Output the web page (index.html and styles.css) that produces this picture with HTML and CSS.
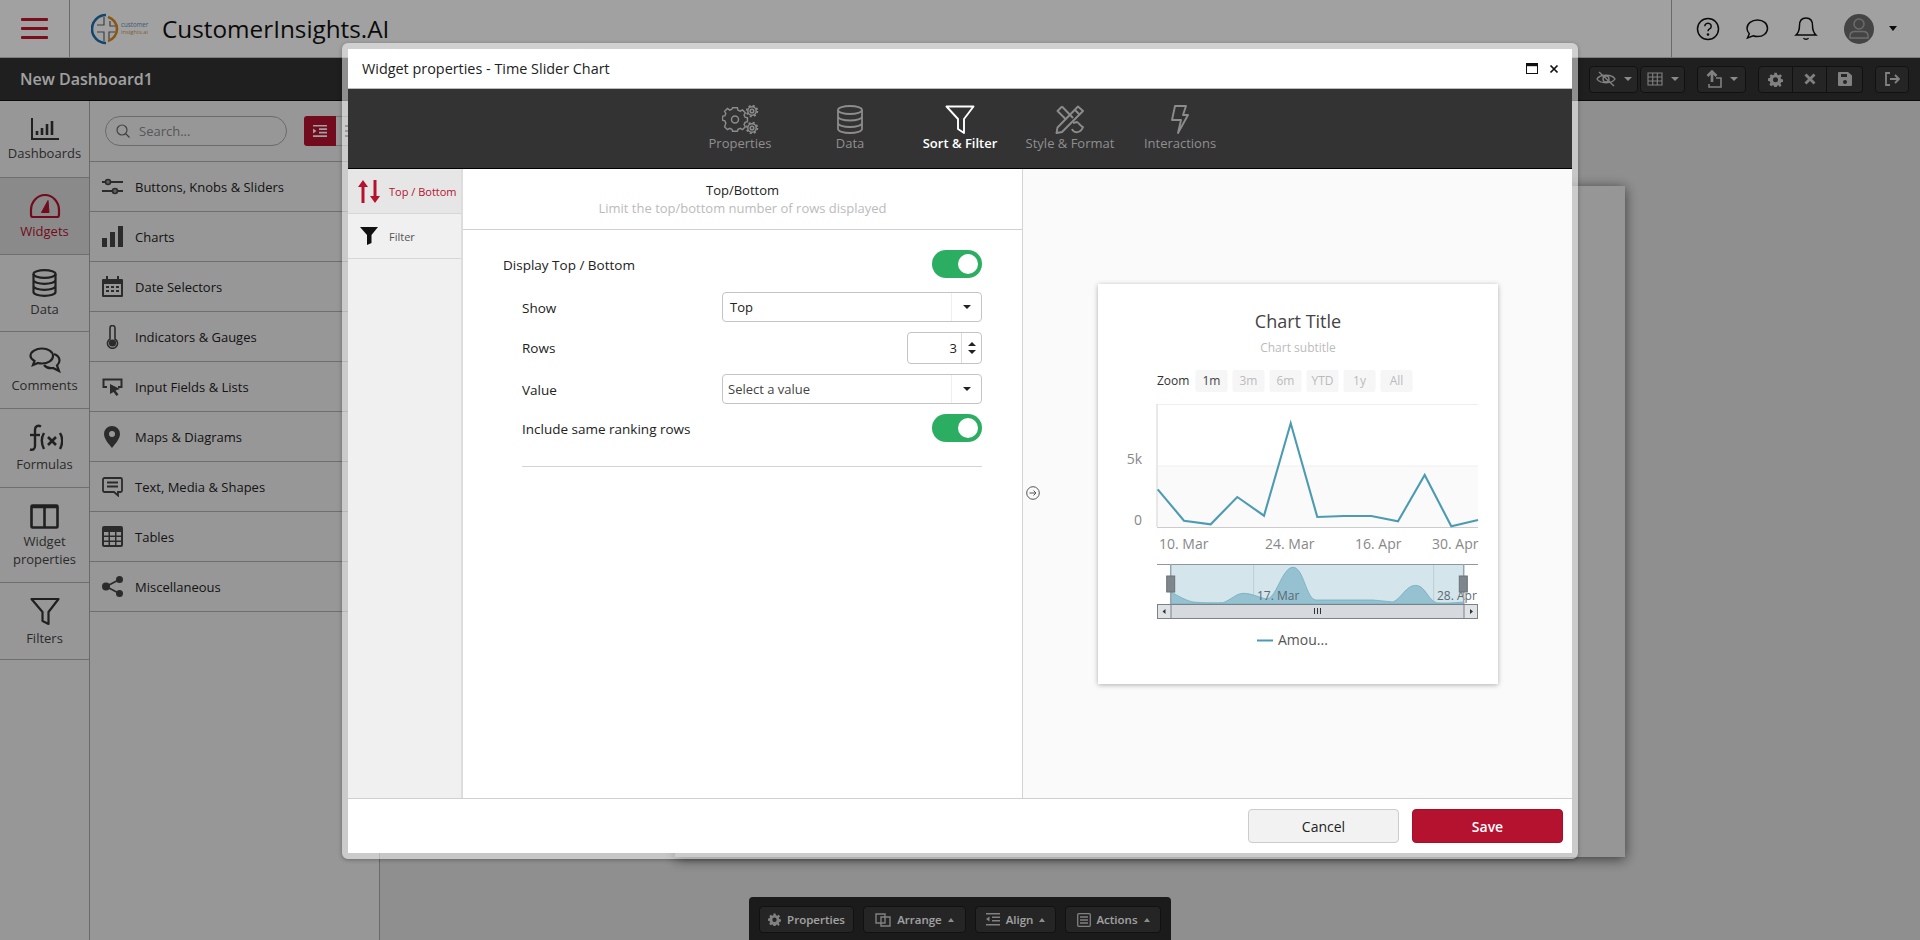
FILE: index.html
```html
<!DOCTYPE html>
<html lang="en">
<head>
<meta charset="utf-8">
<title>CustomerInsights.AI</title>
<link rel="stylesheet" href="styles.css">
</head>
<body>
<div class="app">
  <header class="topbar">
    <div class="burger"><i></i><i></i><i></i></div>
    <div class="brand">
      <svg class="logo" width="58" height="32" viewBox="0 0 58 32">
        <path d="M15 2 A14 14 0 0 0 15 30" fill="none" stroke="#1d6fa8" stroke-width="2.6"/>
        <path d="M17 4 A12.5 12.5 0 0 1 17 28" fill="none" stroke="#d98a1f" stroke-width="2.6"/>
        <path d="M13 4V12H6M6 19H13V28M19 8V13H24M24 19H18V26" fill="none" stroke="#666" stroke-width="1.2"/>
        <text class="logo-a" x="30" y="14">customer</text>
        <text class="logo-b" x="30" y="21">insights.ai</text>
      </svg>
      <span class="brand-name">CustomerInsights.AI</span>
    </div>
    <div class="top-actions">
      <svg width="24" height="24" viewBox="0 0 24 24" fill="none" stroke="#111" stroke-width="1.5"><circle cx="12" cy="12" r="10.5"/><path d="M8.8 9.3a3.2 3 0 1 1 4.8 2.6c-1 .6-1.6 1.1-1.6 2.4"/><circle cx="12" cy="17.5" r=".6" fill="#111"/></svg>
      <svg width="24" height="24" viewBox="0 0 24 24" fill="none" stroke="#111" stroke-width="1.5"><path d="M12.5 3c5.800 0 10 3.500 10 8.300s-4.200 8.300-10 8.300c-1.600 0-3-.3-4.300-.8L2.500 21l1.800-4.300C2.800 15.200 2 13.400 2 11.300 2 6.500 6.700 3 12.500 3z"/></svg>
      <svg width="24" height="26" viewBox="0 0 24 26" fill="none" stroke="#111" stroke-width="1.5"><path d="M12 2c4.500 0 6.500 3.500 6.500 7.500 0 5 1.300 7.500 3.500 9.500H2c2.200-2 3.500-4.500 3.500-9.500C5.500 5.500 7.500 2 12 2z"/><path d="M9.500 22c1 1.800 4 1.800 5 0"/></svg>
      <div class="avatar">
        <svg width="30" height="30" viewBox="0 0 30 30" fill="none" stroke="#aaa" stroke-width="1.5"><circle cx="15" cy="10" r="5"/><path d="M6 24v-2c0-3 2-4.500 5-4.500h8c3 0 5 1.500 5 4.500v2z"/></svg>
      </div>
      <span class="caret-dark"></span>
    </div>
  </header>

  <div class="dashbar">
    <div class="dash-title">New Dashboard1</div>
    <div class="dash-tools">
      <div class="tool-group tight">
        <div class="tool w49"><svg width="20" height="16" viewBox="0 0 20 16" fill="none" stroke="#ccc" stroke-width="1.400"><path d="M1 8c3-5 15-5 18 0-3 5-15 5-18 0z"/><circle cx="10" cy="8" r="3"/><path d="M3 1l15 14"/></svg><span class="caret-up-light"></span></div>
        <div class="tool w45"><svg width="16" height="14" viewBox="0 0 16 14" fill="none" stroke="#ccc" stroke-width="1.100"><path d="M1 1h14v12H1zM1 5h14M1 9h14M5.700 1v12M10.300 1v12"/></svg><span class="caret-up-light"></span></div>
      </div>
      <div class="tool w49"><svg width="16" height="18" viewBox="0 0 16 18" fill="none" stroke="#ccc" stroke-width="1.600"><path d="M6 2v10M1.500 6L6 1.500 10.500 6" stroke-width="2.600"/><path d="M10 8h5v9H3v-3"/></svg><span class="caret-up-light"></span></div>
      <div class="tool-group">
        <div class="tool w35"><svg width="15" height="15" viewBox="0 0 24 24"><path fill="#ccc" d="M10 1h4l.6 3 2.400 1 2.600-1.600 2.800 2.800L20 8.800l1 2.400 3 .6v4l-3 .6-1 2.400 1.600 2.600-2.800 2.800L17 21l-2.400 1-.6 2h-4l-.6-2L7.600 21 5 22.600 2.200 19.800 3.800 17.200l-1-2.400-3-.6v-4l3-.6 1-2.400L2.200 6.200 5 3.400 7.600 5 10 4z M12 8.500a4 4 0 1 0 0 8 4 4 0 0 0 0-8z" fill-rule="evenodd"/></svg></div>
        <div class="tool w34"><svg width="12" height="12" viewBox="0 0 12 12" stroke="#ccc" stroke-width="2.800"><path d="M1.500 1.500l9 9M10.500 1.500l-9 9"/></svg></div>
        <div class="tool w36"><svg width="14" height="14" viewBox="0 0 14 14"><path fill="#ccc" fill-rule="evenodd" d="M1 0h9l4 3.500V13a1 1 0 0 1-1 1H1a1 1 0 0 1-1-1V1a1 1 0 0 1 1-1zm2 2v3h6V2zm4 6a2 2 0 1 0 0 4 2 2 0 0 0 0-4z"/></svg></div>
      </div>
      <div class="tool w34"><svg width="16" height="14" viewBox="0 0 16 14" fill="none" stroke="#ccc" stroke-width="1.800"><path d="M6 1H2v12h4M6 7h9M11 3l4 4-4 4"/></svg></div>
    </div>
  </div>

  <div class="main">
    <nav class="rail">
      <div class="rail-item h77">
        <svg width="29" height="24" viewBox="0 0 29 24" fill="none" stroke="#333" stroke-width="2"><path d="M2 1v21h27"/><path d="M7 14v4M12 11v7M17 7v11M22 4v14" stroke-width="2.600"/></svg>
        <span>Dashboards</span>
      </div>
      <div class="rail-item h77 active">
        <svg width="32" height="26" viewBox="0 0 32 26" fill="none" stroke="#b5122f" stroke-width="2.200"><path d="M4 24H28a2 2 0 0 0 2-2V17A14 15 0 0 0 2 17v5a2 2 0 0 0 2 2z"/><path d="M12.500 19.500l6.500-12 1 12z" fill="#b5122f" stroke-width="1"/></svg>
        <span>Widgets</span>
      </div>
      <div class="rail-item h77">
        <svg width="25" height="28" viewBox="0 0 25 28" fill="none" stroke="#333" stroke-width="2.200"><ellipse cx="12.500" cy="5" rx="11" ry="3.800"/><path d="M1.500 5v18c0 2.200 5 3.800 11 3.800s11-1.600 11-3.800V5M1.500 11c0 2.200 5 3.800 11 3.800s11-1.600 11-3.800M1.500 17c0 2.200 5 3.800 11 3.800s11-1.600 11-3.800"/></svg>
        <span>Data</span>
      </div>
      <div class="rail-item h77">
        <svg width="32" height="26" viewBox="0 0 32 26" fill="none" stroke="#333" stroke-width="2.200"><path d="M13 1.500c6 0 11 3 11 7.500s-5 7.500-11 7.500c-1.500 0-3-.2-4-.5l-5 2 1.500-4C3 12.500 1.500 11 1.500 9c0-4.500 5.500-7.500 11.500-7.500z"/><path d="M25 7c3.500 1.300 5.500 3.500 5.500 6.500 0 2-1 3.500-2.500 5l2 5.500-6-3c-3 .5-7-.5-9-3"/></svg>
        <span>Comments</span>
      </div>
      <div class="rail-item h79">
        <svg width="36" height="28" viewBox="0 0 36 28" fill="none" stroke="#333" stroke-width="2.400"><path d="M14 2.500c-3-1.500-6-.5-6 3.500V22c0 3-2 4.500-5 3.500"/><path d="M3 11h10"/><path d="M17 9c-3 5-3 10 0 16M33 9c3 5 3 10 0 16"/><path d="M21 13l8 8M29 13l-8 8" stroke-width="2.600"/></svg>
        <span>Formulas</span>
      </div>
      <div class="rail-item h95">
        <svg width="29" height="25" viewBox="0 0 29 25" fill="none" stroke="#333" stroke-width="2.600"><rect x="1.500" y="1.500" width="26" height="22" rx="1"/><path d="M14.500 1.500v22M1.500 3h26" /></svg>
        <span>Widget<br>properties</span>
      </div>
      <div class="rail-item h77">
        <svg width="30" height="29" viewBox="0 0 30 29" fill="none" stroke="#333" stroke-width="2.200" stroke-linejoin="round"><path d="M1.500 2h27L18.500 15v12l-6-3v-9z"/></svg>
        <span>Filters</span>
      </div>
    </nav>

    <aside class="panel">
      <div class="panel-search">
        <div class="search">
          <svg width="14" height="14" viewBox="0 0 14 14" fill="none" stroke="#666" stroke-width="1.200"><circle cx="6" cy="6" r="5"/><path d="M9.500 9.500l4 4"/></svg>
          <span>Search...</span>
        </div>
        <div class="seg">
          <div class="seg-on"><svg width="14" height="12" viewBox="0 0 14 12" fill="#fff"><path d="M0 0h14v1.600H0zM6 3.300h8v1.600H6zM6 6.800h8v1.600H6zM0 10.300h14V12H0zM0 3.500l3.500 2.500L0 8.500z"/></svg></div>
          <div class="seg-off"><svg width="14" height="12" viewBox="0 0 14 12" fill="#555"><path d="M0 0h14v2H0zM0 5h14v2H0zM0 10h14v2H0z"/></svg></div>
        </div>
      </div>
      <div class="panel-row"><svg width="21" height="18" viewBox="0 0 21 18" fill="none" stroke="#444" stroke-width="2"><path d="M0 4h21M0 13h21"/><circle cx="6" cy="4" r="2.500" fill="#999" stroke-width="1.600"/><circle cx="13" cy="13" r="2.500" fill="#999" stroke-width="1.600"/></svg><span>Buttons, Knobs &amp; Sliders</span></div>
      <div class="panel-row"><svg width="21" height="21" viewBox="0 0 21 21" fill="#444"><path d="M0 12h5v9H0zM8 6h5v15H8zM16 0h5v21h-5z"/></svg><span>Charts</span></div>
      <div class="panel-row"><svg width="21" height="21" viewBox="0 0 21 21" fill="#444"><path fill-rule="evenodd" d="M1 3h3V0h2v3h9V0h2v3h3a1 1 0 0 1 1 1v16a1 1 0 0 1-1 1H1a1 1 0 0 1-1-1V4a1 1 0 0 1 1-1zm1 5v11h17V8z"/><path d="M4 10h3v2H4zM9 10h3v2H9zM14 10h3v2h-3zM4 14h3v2H4zM9 14h3v2H9zM14 14h3v2h-3z"/></svg><span>Date Selectors</span></div>
      <div class="panel-row"><svg width="21" height="24" viewBox="0 0 21 24" fill="none" stroke="#444" stroke-width="1.600"><path d="M8 14V3a2.500 2.500 0 0 1 5 0v11a5 5 0 1 1-5 0z"/><circle cx="10.500" cy="18" r="2.800" fill="#444"/></svg><span>Indicators &amp; Gauges</span></div>
      <div class="panel-row"><svg width="21" height="18" viewBox="0 0 21 18" fill="none"><path d="M5 9H1.500V1.500h18V9H16" stroke="#444" stroke-width="2"/><path d="M8 6l10 5-4.500 1.500 3 4-2 1.500-3-4L8 16z" fill="#444"/></svg><span>Input Fields &amp; Lists</span></div>
      <div class="panel-row pad3"><svg width="16" height="22" viewBox="0 0 16 22"><path fill="#444" fill-rule="evenodd" d="M8 0a8 8 0 0 1 8 8c0 5-5 10-8 14C5 18 0 13 0 8a8 8 0 0 1 8-8zm0 5a3 3 0 1 0 0 6 3 3 0 0 0 0-6z"/></svg><span>Maps &amp; Diagrams</span></div>
      <div class="panel-row"><svg width="21" height="20" viewBox="0 0 21 20" fill="none" stroke="#444" stroke-width="1.800"><path d="M2.500 1h16A1.500 1.500 0 0 1 20 2.500v11a1.500 1.500 0 0 1-1.500 1.500H16v3.500L12 15H2.500A1.500 1.500 0 0 1 1 13.500v-11A1.500 1.500 0 0 1 2.500 1z"/><path d="M5 5.500h11M5 9.500h11"/></svg><span>Text, Media &amp; Shapes</span></div>
      <div class="panel-row"><svg width="21" height="21" viewBox="0 0 21 21"><path fill="#444" fill-rule="evenodd" d="M2 0h17a2 2 0 0 1 2 2v17a2 2 0 0 1-2 2H2a2 2 0 0 1-2-2V2a2 2 0 0 1 2-2zm0 6v3.500h4.500V6zm6 0v3.500h5V6zm6.500 0v3.500H19V6zM2 11v3.500h4.500V11zm6 0v3.500h5V11zm6.500 0v3.500H19V11zM2 16v3h4.500v-3zm6 0v3h5v-3zm6.500 0v3H19v-3z"/></svg><span>Tables</span></div>
      <div class="panel-row"><svg width="21" height="21" viewBox="0 0 21 21" fill="#444"><circle cx="4" cy="10.500" r="4"/><circle cx="17.500" cy="3.500" r="3.500"/><circle cx="17.500" cy="17.500" r="3.500"/><path d="M4 10.500l13.500-7M4 10.500l13.500 7" stroke="#444" stroke-width="1.800"/></svg><span>Miscellaneous</span></div>
    </aside>

    <section class="canvas">
      <div class="sheet"></div>
      <div class="bottom-tools">
        <div class="bt w95"><svg width="13" height="13" viewBox="0 0 24 24"><path fill="#ccc" d="M10 1h4l.6 3 2.400 1 2.600-1.600 2.800 2.800L20 8.800l1 2.400 3 .6v4l-3 .6-1 2.400 1.600 2.600-2.800 2.800L17 21l-2.400 1-.6 2h-4l-.6-2L7.600 21 5 22.600 2.200 19.800 3.800 17.200l-1-2.400-3-.6v-4l3-.6 1-2.400L2.200 6.200 5 3.400 7.600 5 10 4z M12 8.500a4 4 0 1 0 0 8 4 4 0 0 0 0-8z" fill-rule="evenodd"/></svg><span>Properties</span></div>
        <div class="bt w103"><svg width="16" height="14" viewBox="0 0 16 14" fill="none" stroke="#ccc" stroke-width="1.400"><path d="M1 1h9v9H1zM6 4h9v9H6z"/></svg><span>Arrange</span><i class="tri"></i></div>
        <div class="bt w81"><svg width="14" height="13" viewBox="0 0 14 13" fill="#ccc"><path d="M0 0h14v1.500H0zM6 3.500h8V5H6zM6 7h8v1.500H6zM0 11h14v1.500H0zM0 6l3.500-2.500v5z"/></svg><span>Align</span><i class="tri"></i></div>
        <div class="bt w96"><svg width="14" height="14" viewBox="0 0 14 14" fill="none" stroke="#ccc" stroke-width="1.300"><rect x=".7" y=".7" width="12.600" height="12.600" rx="1"/><path d="M3 4h8M3 7h8M3 10h8"/></svg><span>Actions</span><i class="tri"></i></div>
      </div>
    </section>
  </div>

  <div class="scrim"></div>

  <div class="modal">
    <div class="modal-inner">
      <div class="modal-head">
        <span>Widget properties - Time Slider Chart</span>
        <div class="modal-win">
          <svg width="12" height="11" viewBox="0 0 12 11" fill="none" stroke="#111"><rect x=".5" y=".5" width="11" height="10"/><path d="M0 2h12" stroke-width="2.400"/></svg>
          <svg width="10" height="10" viewBox="0 0 10 10" stroke="#111" stroke-width="1.700"><path d="M1.500 1.500l7 7M8.500 1.500l-7 7"/></svg>
        </div>
      </div>
      <div class="modal-tabs">
        <div class="mtab">
          <svg width="37" height="29" viewBox="0 0 37 29" fill="none" stroke="#8c8c8c" stroke-width="1.500"><path d="M11 6h5l.7 2.500 2.300 1 2.300-1.300 3 3-1.300 2.300 1 2.300 2.500.7v4l-2.500.7-1 2.300 1.300 2.300-3 3-2.300-1.300-2.300 1-.7 2H11l-.7-2-2.300-1-2.300 1.300-3-3L4 22l-1-2.300-2.500-.7v-4l2.500-.7 1-2.300-1.300-2.300 3-3L8 8.500l2.300-1z" transform="translate(0 -3) scale(.96)"/><circle cx="13" cy="14.500" r="3.500"/><circle cx="30" cy="6" r="4.200"/><circle cx="30" cy="6" r="5.400" stroke-width="1.600" stroke-dasharray="2.100 2.140"/><circle cx="30" cy="6" r="1.800"/><circle cx="30" cy="23" r="4.200"/><circle cx="30" cy="23" r="5.400" stroke-width="1.600" stroke-dasharray="2.100 2.140"/><circle cx="30" cy="23" r="1.800"/></svg>
          <span>Properties</span>
        </div>
        <div class="mtab">
          <svg width="26" height="29" viewBox="0 0 26 29" fill="none" stroke="#8c8c8c" stroke-width="1.800"><ellipse cx="13" cy="5" rx="12" ry="4"/><path d="M1 5v19c0 2.200 5.400 4 12 4s12-1.800 12-4V5M1 11.500c0 2.200 5.400 4 12 4s12-1.800 12-4M1 18c0 2.200 5.400 4 12 4s12-1.800 12-4"/></svg>
          <span>Data</span>
        </div>
        <div class="mtab on">
          <svg width="30" height="29" viewBox="0 0 30 29" fill="none" stroke="#fff" stroke-width="1.900" stroke-linejoin="round"><path d="M1.500 1.500h27L19 14v14l-6-4V14z"/></svg>
          <span>Sort &amp; Filter</span>
        </div>
        <div class="mtab">
          <svg width="30" height="29" viewBox="0 0 30 29" fill="none" stroke="#8c8c8c" stroke-width="1.900" stroke-linejoin="round"><path d="M23 1.500l5 4.500L7 27l-5.500 1 1-5.500z"/><path d="M20 5l4.500 4.500"/><path d="M7 1.500L2.500 6l8.500 8.500M18 18l4-1c3 2 4 5 6 5-2 6-9 7-11 2"/><path d="M7 1.500L18 13"/></svg>
          <span>Style &amp; Format</span>
        </div>
        <div class="mtab">
          <svg width="18" height="29" viewBox="0 0 18 29" fill="none" stroke="#8c8c8c" stroke-width="1.900" stroke-linejoin="round"><path d="M4 1h11l-3 9h5L7 28l3-13H1z"/></svg>
          <span>Interactions</span>
        </div>
      </div>
      <div class="modal-body">
        <div class="subnav">
          <div class="subnav-item current">
            <svg width="22" height="23" viewBox="0 0 22 23" fill="#b5122f"><path d="M5 0l5 7H6.500v16h-3V7H0zM17 23l-5-7h3.500V0h3v16H22z"/></svg>
            <span>Top / Bottom</span>
          </div>
          <div class="subnav-item">
            <svg width="18" height="18" viewBox="0 0 18 18" fill="#111"><path d="M0 0h18l-6.500 8v8L7 18V8z"/></svg>
            <span>Filter</span>
          </div>
        </div>
        <div class="form-col">
          <div class="form-head">
            <div class="form-title">Top/Bottom</div>
            <div class="form-sub">Limit the top/bottom number of rows displayed</div>
          </div>
          <div class="form-body">
            <div class="frow r-top">
              <label>Display Top / Bottom</label>
              <div class="toggle"><i></i></div>
            </div>
            <div class="indent">
              <div class="frow r-show">
                <label>Show</label>
                <div class="select"><span>Top</span><b><i class="tri-dark"></i></b></div>
              </div>
              <div class="frow r-rows">
                <label>Rows</label>
                <div class="spinner"><span>3</span><b><i class="tri-up"></i><i class="tri-dark"></i></b></div>
              </div>
              <div class="frow r-value">
                <label>Value</label>
                <div class="select placeholder"><span>Select a value</span><b><i class="tri-dark"></i></b></div>
              </div>
              <div class="frow r-same">
                <label>Include same ranking rows</label>
                <div class="toggle"><i></i></div>
              </div>
              <hr class="rule">
            </div>
          </div>
        </div>
        <div class="preview">
          <div class="collapse"><svg width="14" height="14" viewBox="0 0 14 14" fill="none" stroke="#555"><circle cx="7" cy="7" r="6.300"/><path d="M3.500 7h6.500M7.500 4.500L10 7l-2.500 2.500"/></svg></div>
          <div class="card">
            <svg class="chart" width="400" height="400" viewBox="0 0 400 400">
              <text class="c-title" x="200" y="44">Chart Title</text>
              <text class="c-sub" x="200" y="68">Chart subtitle</text>
              <text class="c-zoom" x="59" y="101">Zoom</text>
              <g class="c-btn">
                <rect x="97.500" y="86" width="32" height="22" rx="2"/>
                <rect x="134.500" y="86" width="32" height="22" rx="2"/>
                <rect x="171.500" y="86" width="32" height="22" rx="2"/>
                <rect x="208.500" y="86" width="32" height="22" rx="2"/>
                <rect x="245.500" y="86" width="32" height="22" rx="2"/>
                <rect x="282.500" y="86" width="32" height="22" rx="2"/>
              </g>
              <text class="c-range first" x="113.500" y="100.500">1m</text>
              <text class="c-range" x="150.500" y="100.500">3m</text>
              <text class="c-range" x="187.500" y="100.500">6m</text>
              <text class="c-range" x="224.500" y="100.500">YTD</text>
              <text class="c-range" x="261.500" y="100.500">1y</text>
              <text class="c-range" x="298.500" y="100.500">All</text>

              <rect x="59" y="182" width="321" height="61" fill="#fafafa"/>
              <path d="M59 182H380M59 120.500H380" stroke="#eee"/>
              <path d="M59 120V243" stroke="#e2e2e2" stroke-width="1.500"/>
              <path d="M59 243.500H380" stroke="#ccc"/>
              <polyline points="59.700,205.300 86,236.700 112.700,240.300 139.300,213 166,231.700 192.700,139.300 219.300,233 246,232 273.300,232 300,237.300 326.700,191 353.300,242.300 380,236" fill="none" stroke="#4c9bb3" stroke-width="2.100"/>
              <text class="c-axis end" x="44" y="180">5k</text>
              <text class="c-axis end" x="44" y="241">0</text>
              <text class="c-axis" x="61" y="265">10. Mar</text>
              <text class="c-axis" x="167" y="265">24. Mar</text>
              <text class="c-axis" x="257" y="265">16. Apr</text>
              <text class="c-axis" x="334" y="265">30. Apr</text>

              <rect x="72.700" y="280" width="293" height="40" fill="#d4e5ec"/>
              <path d="M155.700 280V320M335.700 280V320" stroke="#bdcdd4"/>
              <path d="M72.700 307.700C82 313 88 316.500 95 318C105 319 115 319 125 318.700C133 316 138 309.300 145.700 309.300C153 309.300 160 313 168 315C178 316 184 283.300 195 283.300C206 283.300 208 316 218.300 316L275 316L295 318C303 315 308 301.300 317.700 301.300C327 301.300 330 316 338.300 318.700C345 319.500 355 319 365.700 318L365.700 320L72.700 320Z" fill="#95c1d0" stroke="#74adc0" stroke-width=".8"/>
              <text class="c-nav" x="159" y="316">17. Mar</text>
              <text class="c-nav" x="339" y="316">28. Apr</text>
              <path d="M59 280.500H380" stroke="#8d989e"/>
              <path d="M72.700 280V320M365.700 280V320" stroke="#9aa5ab" stroke-width="1.500"/>
              <rect x="68.700" y="292" width="8" height="16" fill="#7f868c" stroke="#6b7278"/>
              <rect x="361.300" y="292" width="8" height="16" fill="#7f868c" stroke="#6b7278"/>
              <rect x="59.500" y="320.500" width="320" height="14" fill="#dfe3e6" stroke="#7a8288"/>
              <rect x="73" y="320.500" width="293" height="14" fill="#d6dade" stroke="#7a8288"/>
              <path d="M216.500 324v6M219.500 324v6M222.500 324v6" stroke="#333"/>
              <path d="M67.500 325v5l-3-2.500zM372 325v5l3-2.500z" fill="#333"/>
              <path d="M159 356.500H175" stroke="#4c9bb3" stroke-width="2"/>
              <text class="c-legend" x="180" y="361">Amou...</text>
            </svg>
          </div>
        </div>
      </div>
      <div class="modal-foot">
        <button class="btn cancel">Cancel</button>
        <button class="btn save">Save</button>
      </div>
    </div>
  </div>
</div>
</body>
</html>
```

FILE: styles.css
```css
* { box-sizing: border-box; }
html, body { margin: 0; padding: 0; height: 100%; }
body { font-family: "Open Sans", "Noto Sans", sans-serif; color: #222; overflow: hidden; background: #e3e3e4; }
.app { position: relative; width: 1920px; height: 940px; display: flex; flex-direction: column; overflow: hidden; }
svg { display: block; flex: none; }

/* top bar */
.topbar { height: 57px; flex: none; background: #fff; display: flex; align-items: stretch; }
.burger { width: 70px; border-right: 1px solid #a8a8a8; padding: 18px 21px 0; display: flex; flex-direction: column; gap: 6px; }
.burger i { display: block; width: 27px; height: 3px; background: #c3152f; border-radius: 1px; }
.brand { display: flex; align-items: center; padding-left: 21px; gap: 13px; flex: 1; }
.logo-a, .logo-b { font-family: "Open Sans", sans-serif; }
.logo-a { font-size: 6.2px; fill: #5f8fb0; }
.logo-b { font-size: 5.8px; fill: #c69a55; }
.brand-name { font-size: 24.3px; color: #111; line-height: 1.3; }
.top-actions { width: 249px; border-left: 1px solid #a8a8a8; display: flex; align-items: center; padding-left: 24px; gap: 25px; }
.avatar { width: 30px; height: 30px; border-radius: 50%; background: #6c6c6c; margin-left: 1px; margin-right: -15px; }
.caret-dark { width: 0; height: 0; border: 4px solid transparent; border-top: 5px solid #111; border-bottom: 0; margin-left: 5px; }

/* dashboard bar */
.dashbar { height: 44px; flex: none; background: #313131; border-top: 1px solid #c4c4c4; border-bottom: 1px solid #111; display: flex; align-items: center; justify-content: space-between; padding: 0 11px 0 20px; }
.dash-title { color: #fff; font-size: 16px; font-weight: 600; }
.dash-tools { display: flex; gap: 12px; }
.tool-group { display: flex; }
.tool-group.tight { gap: 2px; }
.tool { height: 27px; background: #3c3c3c; border: 1px solid #1c1c1c; border-radius: 4px; display: flex; align-items: center; justify-content: center; gap: 8px; }
.tool-group:not(.tight) .tool { border-radius: 0; border-left-width: 0; }
.tool-group:not(.tight) .tool:first-child { border-radius: 4px 0 0 4px; border-left-width: 1px; }
.tool-group:not(.tight) .tool:last-child { border-radius: 0 4px 4px 0; }
.w49 { width: 49px; } .w45 { width: 45px; } .w35 { width: 35px; } .w34 { width: 34px; } .w36 { width: 36px; }
.caret-up-light { width: 0; height: 0; border: 4px solid transparent; border-top: 4px solid #ddd; border-bottom: 0; }

/* main */
.main { flex: 1; display: flex; min-height: 0; }
.rail { width: 90px; flex: none; background: #f0f0f0; border-right: 1px solid #a8a8a8; }
.rail-item { border-bottom: 1px solid #b0b0b0; display: flex; flex-direction: column; align-items: center; justify-content: center; gap: 3px; font-size: 13px; line-height: 18px; text-align: center; color: #444; padding-top: 1px; }
.rail-item.active { background: #dbdbdb; color: #b5122f; }
.h77 { height: 77px; } .h79 { height: 79px; } .h95 { height: 95px; }
.panel { width: 290px; flex: none; background: #f0f0f0; border-right: 1px solid #a8a8a8; }
.panel-search { height: 61px; border-bottom: 1px solid #b0b0b0; display: flex; align-items: center; padding: 0 0 0 15px; gap: 17px; }
.search { width: 182px; height: 30px; border: 1px solid #a8a8a8; border-radius: 15px; display: flex; align-items: center; padding-left: 10px; gap: 9px; font-size: 13px; color: #888; }
.seg { display: flex; height: 30px; }
.seg-on { width: 32px; background: #b5122f; border-radius: 3px 0 0 3px; display: flex; align-items: center; justify-content: center; }
.seg-off { width: 32px; border: 1px solid #bbb; border-left: 0; border-radius: 0 3px 3px 0; display: flex; align-items: center; justify-content: center; }
.panel-row { height: 50px; border-bottom: 1px solid #b0b0b0; display: flex; align-items: center; padding-left: 12px; gap: 12px; font-size: 13px; color: #222; }
.panel-row.pad3 { padding-left: 14px; gap: 15px; }
.canvas { flex: 1; position: relative; padding: 85px 0 0 295px; background: #e3e3e4; }
.sheet { width: 950px; height: 671px; background: #eee; box-shadow: 0 2px 12px rgba(0,0,0,.6); }
.bottom-tools { position: absolute; left: 369px; bottom: 0; width: 422px; height: 43px; background: #2b2b2b; border-radius: 4px 4px 0 0; display: flex; gap: 9px; padding: 9px 10px 7px; }
.bt { height: 27px; background: #3c3c3c; border: 1px solid #1c1c1c; border-radius: 4px; display: flex; align-items: center; justify-content: center; gap: 6px; color: #fff; font-size: 11.5px; font-weight: 600; }
.w95 { width: 95px; } .w103 { width: 103px; } .w81 { width: 81px; } .w96 { width: 96px; }
.tri { width: 0; height: 0; border: 3.500px solid transparent; border-bottom: 4px solid #ddd; border-top: 0; }

.scrim { position: absolute; inset: 0; background: rgba(0,0,0,.37); }

/* modal */
.modal { position: absolute; left: 342px; top: 43px; width: 1236px; height: 816px; border: 6px solid rgba(255,255,255,.5); border-radius: 6px; box-shadow: 0 1px 4px rgba(0,0,0,.3); }
.modal-inner { height: 100%; background: #fff; display: flex; flex-direction: column; }
.modal-head { height: 39px; flex: none; display: flex; align-items: center; justify-content: space-between; padding: 0 13px 0 14px; font-size: 14.4px; color: #222; }
.modal-win { display: flex; align-items: center; gap: 11px; }
.modal-tabs { height: 81px; flex: none; background: #333; border-top: 1px solid #bbb; border-bottom: 1px solid #000; display: flex; justify-content: center; }
.mtab { width: 110px; padding-top: 16px; display: flex; flex-direction: column; align-items: center; color: #8f8f8f; font-size: 13px; line-height: 18px; font-weight: 500; }
.mtab.on { color: #fff; font-weight: 600; }
.modal-body { flex: 1; display: flex; min-height: 0; }
.subnav { width: 115px; flex: none; background: #f0f0f0; border-right: 2px solid #ddd; }
.subnav-item { height: 45px; border-bottom: 1px solid #d6d6d6; display: flex; align-items: center; padding-left: 10px; gap: 9px; font-size: 11px; color: #555; }
.subnav-item.current { background: #e6e6e6; color: #b5122f; }
.subnav-item:not(.current) svg { margin: 0 2px; }
.form-col { width: 560px; flex: none; border-right: 1px solid #d4d4d4; }
.form-head { height: 61px; border-bottom: 1px solid #d0d0d0; text-align: center; padding-top: 12px; }
.form-title { font-size: 13px; line-height: 18px; color: #222; }
.form-sub { font-size: 13px; line-height: 18px; color: #bbb; }
.form-body { padding: 20px 40px 0 40px; }
.frow { display: flex; align-items: center; justify-content: space-between; font-size: 13.5px; color: #222; }
.frow label { padding-top: 2px; }
.r-top { height: 28px; }
.indent { padding-left: 19px; }
.r-show { margin-top: 14px; height: 30px; }
.r-rows { margin-top: 10px; height: 32px; }
.r-rows label { padding-top: 0; }
.r-value { margin-top: 10px; height: 30px; }
.r-same { margin-top: 10px; height: 28px; }
.rule { border: 0; border-top: 1px solid #d4d4d4; margin: 24px 0 0; }
.toggle { width: 50px; height: 28px; background: #2bae62; border-radius: 14px; padding: 4px; display: flex; justify-content: flex-end; }
.toggle i { width: 20px; height: 20px; background: #fff; border-radius: 50%; }
.select { width: 260px; height: 30px; border: 1px solid #c4c4c4; border-radius: 4px; display: flex; align-items: center; justify-content: space-between; font-size: 13px; padding-left: 7px; }
.select.placeholder { padding-left: 5px; color: #444; }
.select b { width: 30px; height: 100%; border-left: 1px solid #eee; display: flex; align-items: center; justify-content: center; }
.tri-dark { display: block; width: 0; height: 0; border: 4px solid transparent; border-top: 4px solid #222; border-bottom: 0; }
.tri-up { display: block; width: 0; height: 0; border: 4px solid transparent; border-bottom: 4px solid #222; border-top: 0; }
.spinner { width: 75px; height: 32px; border: 1px solid #c4c4c4; border-radius: 4px; display: flex; align-items: center; justify-content: space-between; font-size: 13px; }
.spinner span { flex: 1; text-align: right; padding-right: 4px; }
.spinner b { width: 20px; height: 100%; border-left: 1px solid #ddd; display: flex; flex-direction: column; align-items: center; justify-content: center; gap: 4px; }
.preview { flex: 1; background: #fafafa; position: relative; display: flex; justify-content: center; padding: 115px 0 0 1px; }
.collapse { position: absolute; left: 3px; top: 317px; }
.card { width: 400px; height: 400px; background: #fff; box-shadow: 0 1px 5px rgba(0,0,0,.3); }
.chart text { font-family: "Open Sans", sans-serif; }
.c-title { font-size: 18px; fill: #444; text-anchor: middle; }
.c-sub { font-size: 12px; fill: #bbb; text-anchor: middle; }
.c-zoom { font-size: 12px; fill: #333; }
.c-btn rect { fill: #f6f6f6; }
.c-range { font-size: 12px; fill: #bbb; text-anchor: middle; }
.c-range.first { fill: #444; }
.c-axis { font-size: 14px; fill: #888; }
.c-axis.end { text-anchor: end; }
.c-nav { font-size: 12px; fill: #5a6a70; }
.c-legend { font-size: 14px; fill: #555; }
.modal-foot { height: 55px; flex: none; border-top: 1px solid #d0d0d0; display: flex; justify-content: flex-end; align-items: flex-start; gap: 13px; padding: 10px 9px 0 0; }
.btn { width: 151px; height: 34px; border-radius: 4px; font-family: inherit; font-size: 14px; padding: 0; }
.cancel { background: #f2f2f2; border: 1px solid #ccc; color: #222; }
.save { background: #b5122f; border: 1px solid #a50f28; color: #fff; font-weight: 600; }
```
